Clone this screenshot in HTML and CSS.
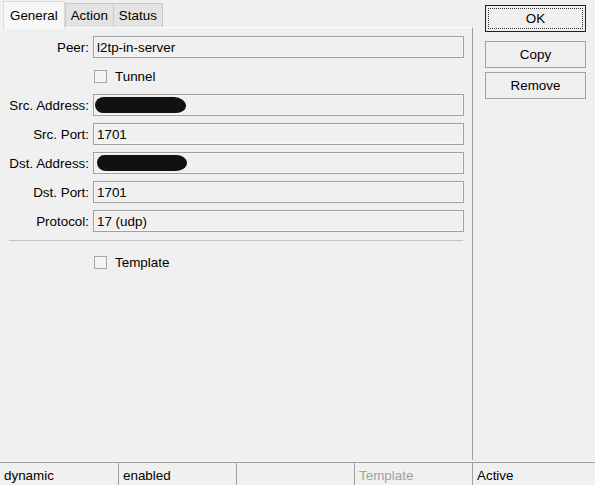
FILE: index.html
```html
<!DOCTYPE html>
<html lang="en">
<head>
    <meta charset="UTF-8">
    <title>Connection</title>
    <link rel="stylesheet" href="styles.css">
</head>
<body>

<div class="window">
    <div class="main">
        <div class="left">
            <div class="tabs">
                <div class="tab active">General</div>
                <div class="tab">Action</div>
                <div class="tab">Status</div>
            </div>

            <div class="panel">
                <div class="form">
                    <label>Peer:</label>
                    <div class="field">l2tp-in-server</div>

                    <span></span>
                    <div class="check"><span class="box"></span>Tunnel</div>

                    <label>Src. Address:</label>
                    <div class="field"><span class="blot"></span></div>

                    <label>Src. Port:</label>
                    <div class="field">1701</div>

                    <label>Dst. Address:</label>
                    <div class="field"><span class="blot blot-2"></span></div>

                    <label>Dst. Port:</label>
                    <div class="field">1701</div>

                    <label>Protocol:</label>
                    <div class="field">17 (udp)</div>
                </div>

                <hr class="sep">

                <div class="form">
                    <span></span>
                    <div class="check"><span class="box"></span>Template</div>
                </div>
            </div>
        </div>

        <div class="buttons">
            <button class="btn default"><span>OK</span></button>
            <button class="btn">Copy</button>
            <button class="btn">Remove</button>
        </div>
    </div>

    <div class="statusbar">
        <div class="cell">dynamic</div>
        <div class="cell">enabled</div>
        <div class="cell"></div>
        <div class="cell muted">Template</div>
        <div class="cell last">Active</div>
    </div>
</div>

</body>
</html>
```

FILE: styles.css
```css
html, body {
    margin: 0;
    padding: 0;
    background: #f0f0f0;
}

body {
    font-family: "Liberation Sans", Arial, sans-serif;
    font-size: 13.4px;
    color: #000;
}

.window {
    width: 595px;
    height: 485px;
    display: flex;
    flex-direction: column;
}

.main {
    flex: 1;
    display: flex;
}

.left {
    width: 473px;
    display: flex;
    flex-direction: column;
}

/* tab strip */
.tabs {
    display: flex;
    padding: 1px 0 0 3px;
    height: 27px;
    box-sizing: border-box;
}

.tab {
    margin-top: 2px;
    padding: 4px 5px 0 5px;
    background: #e3e3e3;
    border: 1px solid #c8c8c8;
    border-bottom: none;
    margin-left: -1px;
}

.tab.active {
    margin-top: 0;
    padding: 6px 6px 0 6px;
    background: #f7f7f7;
    border-color: #dadada;
    margin-left: 0;
    margin-right: 1px;
    position: relative;
    z-index: 1;
    margin-bottom: -2px;
}

.panel {
    flex: 1;
    border-top: 1px solid #fcfcfc;
    border-right: 1px solid #a0a0a0;
    padding: 8px 8px 0 0;
    margin-bottom: 2px;
}

/* label / value rows */
.form {
    display: grid;
    grid-template-columns: 89px 371px;
    column-gap: 4px;
    row-gap: 7px;
    align-items: center;
}

.form label {
    text-align: right;
    white-space: nowrap;
}

.field {
    height: 22px;
    box-sizing: border-box;
    border: 1px solid #a0a0a0;
    box-shadow: inset 0 0 0 1px #f7f7f7;
    padding: 3px 4px 0 3px;
    position: relative;
}

.check {
    height: 22px;
    display: flex;
    align-items: center;
    padding-left: 1px;
}

.box {
    width: 11px;
    height: 11px;
    border: 1px solid #a6a6a6;
    background: #f4f4f4;
    margin-right: 8px;
}

/* redacted address */
.blot {
    position: absolute;
    left: 1px;
    top: 2px;
    width: 91px;
    height: 16px;
    background: #111;
    border-radius: 9px 12px 10px 8px / 8px 9px 7px 8px;
    filter: blur(0.7px);
}

.blot-2 {
    left: 3px;
    width: 90px;
    border-radius: 7px 11px 12px 9px / 8px 8px 8px 8px;
}

.sep {
    margin: 8px 0 10px 9px;
    width: 454px;
    border: none;
    border-top: 1px solid #c4c4c4;
    height: 0;
}

/* buttons on the right */
.buttons {
    display: flex;
    flex-direction: column;
    gap: 4px;
    padding: 5px 0 0 12px;
}

.btn {
    width: 101px;
    height: 27px;
    font-family: inherit;
    font-size: 13.4px;
    background: #efefef;
    border: 1px solid #a0a0a0;
    padding: 0;
    color: #000;
}

.btn.default {
    border-color: #1e1e1e;
    margin-bottom: 5px;
    padding: 2px;
}

.btn.default span {
    display: flex;
    align-items: center;
    justify-content: center;
    height: 100%;
    border: 1px dotted #333;
    box-sizing: border-box;
}

/* bottom status bar */
.statusbar {
    display: flex;
    height: 23px;
}

.cell {
    width: 118px;
    border-top: 1px solid #a0a0a0;
    border-left: 1px solid #a0a0a0;
    padding: 5px 0 0 4px;
    box-sizing: border-box;
    line-height: 15px;
}

.cell:first-child {
    width: 118px;
    border-left: none;
}

.cell.muted {
    color: #a0a0a0;
}

.cell.last {
    flex: 1;
}
```
